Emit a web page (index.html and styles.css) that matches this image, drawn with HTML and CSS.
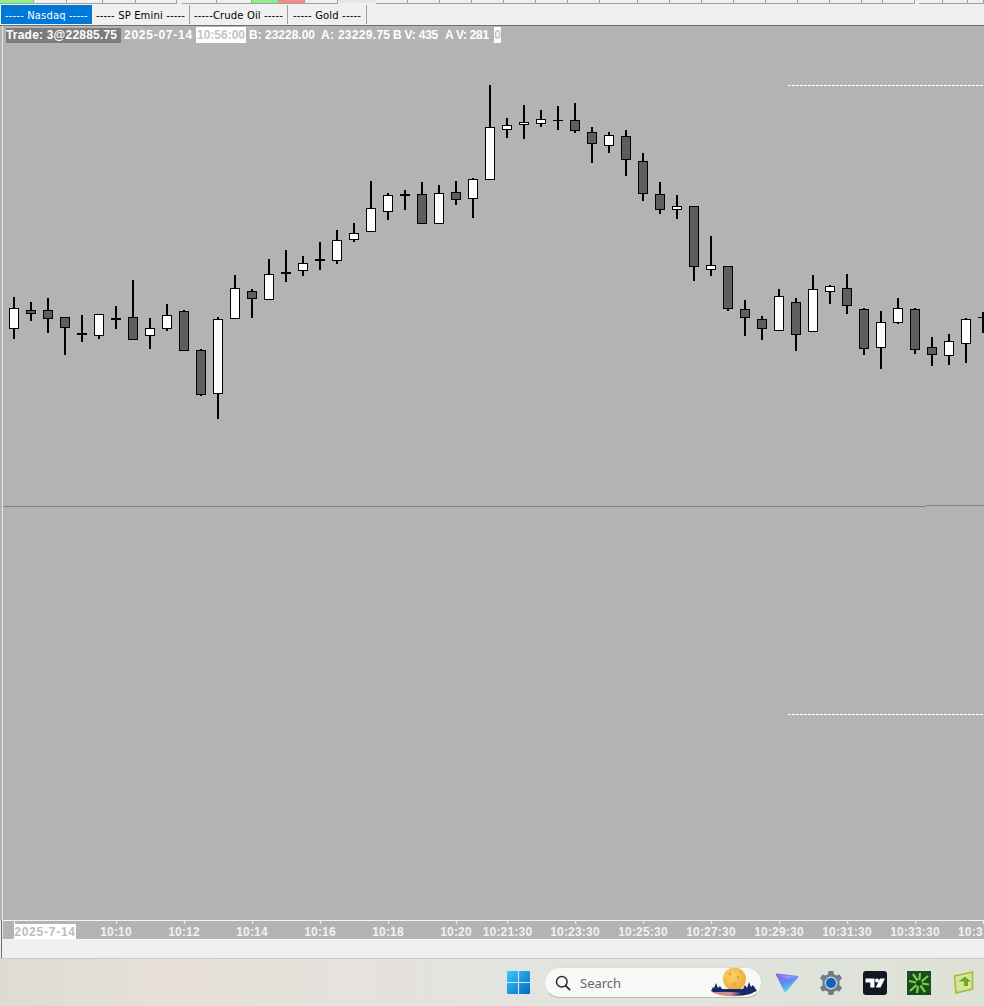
FILE: index.html
```html
<!DOCTYPE html>
<html lang="en">
<head>
<meta charset="utf-8">
<title>Chart</title>
<link rel="stylesheet" href="styles.css">
</head>
<body>
<div class="app">
  <div class="strip">
    <i class="seg s-green w34"></i><i class="seg w33"></i><i class="seg w36"></i><i class="seg w33"></i><i class="seg w41"></i><i class="seg gap5"></i><i class="seg w35"></i><i class="seg w35"></i><i class="seg s-green w27"></i><i class="seg s-red w26"></i><i class="seg w33"></i><i class="seg s-dot w38"></i>
    <i class="seg w32"></i><i class="seg w32"></i><i class="seg w32"></i><i class="seg w32"></i><i class="seg w32"></i><i class="seg w32"></i><i class="seg w32"></i><i class="seg w38"></i><i class="seg w32"></i><i class="seg w32"></i><i class="seg w32"></i><i class="seg w32"></i><i class="seg w32"></i><i class="seg w32"></i><i class="seg w32"></i><i class="seg w21"></i><i class="seg w32"></i><i class="seg gap4"></i><i class="seg w24"></i><i class="seg w25"></i><i class="seg w16"></i>
  </div>
  <div class="tabs">
    <span class="tab active">----- Nasdaq -----</span>
    <span class="tab w-sp">----- SP Emini -----</span>
    <span class="tab w-oil">-----Crude Oil -----</span>
    <span class="tab w-gold">----- Gold -----</span>
  </div>
  <div class="chart">
    <div class="chart-left"></div>
    <div class="chart-main">
      <div class="quote">
        <span class="q-trade">Trade: 3@22885.75</span>
        <span class="q-date">2025-07-14</span>
        <span class="q-time">10:56:00</span>
        <span class="q-b">B: 23228.00</span>
        <span class="q-a">A: 23229.75</span>
        <span class="q-bv">B V: 435</span>
        <span class="q-av">A V: 281</span>
        <span class="q-zero">0</span>
      </div>
      <svg class="plot" width="984" height="894" viewBox="0 0 984 894" shape-rendering="crispEdges" aria-label="Candlestick chart">
        <g transform="translate(-3 -26)">
          <line class="pane" x1="3" y1="506.5" x2="926" y2="506.5"/>
          <line class="pane" x1="926" y1="505.5" x2="984" y2="505.5"/>
          <line class="dash" x1="788" y1="85.5" x2="984" y2="85.5"/>
          <line class="dash" x1="788" y1="714.5" x2="984" y2="714.5"/>
          <g class="wicks">
            <path d="M14 297V339M31 302V321M48 298V333M65 317V355M82 315V342M99 314V339M116 306V329M133 280V340M150 318V349M167 304V331M184 310V351M201 349V396M218 317V419M235 275V319M252 289V318M269 259V300M286 250V282M303 256V276M320 242V270M337 230V264M354 223V242M371 181V232M388 193V220M405 190V210M422 182V224M439 185V224M456 181V205M473 178V218M490 85V180M507 118V138M524 105V139M541 110V127M558 106V130M575 103V133M592 127V163M609 132V153M626 130V176M643 153V201M660 182V214M677 195V219M694 206V281M711 236V276M728 266V311M745 300V336M762 316V340M779 289V331M796 298V351M813 275V332M830 285V304M847 274V314M864 308V355M881 311V369M898 298V324M915 308V354M932 337V366M949 334V365M966 318V363M983 312V333"/>
          </g>
          <g class="dojis">
            <rect x="77" y="333" width="10" height="2"/><rect x="111" y="318" width="10" height="2"/><rect x="281" y="272" width="10" height="2"/><rect x="315" y="259" width="10" height="2"/><rect x="400" y="194" width="10" height="2"/><rect x="553" y="120" width="10" height="1"/><rect x="978" y="317" width="6" height="1"/>
          </g>
          <g class="up">
            <rect x="9.5" y="308.5" width="9" height="20"/><rect x="94.5" y="314.5" width="9" height="21"/><rect x="145.5" y="328.5" width="9" height="7"/><rect x="162.5" y="315.5" width="9" height="13"/><rect x="213.5" y="319.5" width="9" height="74"/><rect x="230.5" y="288.5" width="9" height="30"/><rect x="264.5" y="274.5" width="9" height="25"/><rect x="298.5" y="263.5" width="9" height="7"/><rect x="332.5" y="240.5" width="9" height="20"/><rect x="349.5" y="233.5" width="9" height="6"/><rect x="366.5" y="208.5" width="9" height="23"/><rect x="383.5" y="195.5" width="9" height="16"/><rect x="434.5" y="193.5" width="9" height="30"/><rect x="468.5" y="179.5" width="9" height="19"/><rect x="485.5" y="127.5" width="9" height="52"/><rect x="502.5" y="125.5" width="9" height="4"/><rect x="519.5" y="122.5" width="9" height="2"/><rect x="536.5" y="119.5" width="9" height="4"/><rect x="604.5" y="135.5" width="9" height="10"/><rect x="672.5" y="206.5" width="9" height="3"/><rect x="706.5" y="265.5" width="9" height="4"/><rect x="774.5" y="296.5" width="9" height="34"/><rect x="808.5" y="289.5" width="9" height="42"/><rect x="825.5" y="286.5" width="9" height="5"/><rect x="876.5" y="322.5" width="9" height="25"/><rect x="893.5" y="308.5" width="9" height="14"/><rect x="944.5" y="341.5" width="9" height="14"/><rect x="961.5" y="319.5" width="9" height="24"/>
          </g>
          <g class="down">
            <rect x="26.5" y="310.5" width="9" height="3"/><rect x="43.5" y="310.5" width="9" height="8"/><rect x="60.5" y="317.5" width="9" height="10"/><rect x="128.5" y="317.5" width="9" height="22"/><rect x="179.5" y="311.5" width="9" height="39"/><rect x="196.5" y="350.5" width="9" height="44"/><rect x="247.5" y="291.5" width="9" height="7"/><rect x="417.5" y="194.5" width="9" height="29"/><rect x="451.5" y="192.5" width="9" height="7"/><rect x="570.5" y="120.5" width="9" height="10"/><rect x="587.5" y="132.5" width="9" height="11"/><rect x="621.5" y="136.5" width="9" height="23"/><rect x="638.5" y="161.5" width="9" height="32"/><rect x="655.5" y="194.5" width="9" height="15"/><rect x="689.5" y="206.5" width="9" height="60"/><rect x="723.5" y="266.5" width="9" height="42"/><rect x="740.5" y="309.5" width="9" height="8"/><rect x="757.5" y="319.5" width="9" height="9"/><rect x="791.5" y="302.5" width="9" height="32"/><rect x="842.5" y="288.5" width="9" height="17"/><rect x="859.5" y="309.5" width="9" height="39"/><rect x="910.5" y="309.5" width="9" height="40"/><rect x="927.5" y="347.5" width="9" height="7"/>
          </g>
        </g>
      </svg>
    </div>
  </div>
  <div class="axis">
    <div class="axis-left"></div>
    <div class="axis-main">
      <span class="tick t-date">2025-7-14</span>
      <span class="tick t1">10:10</span><span class="tick t2">10:12</span><span class="tick t3">10:14</span><span class="tick t4">10:16</span><span class="tick t5">10:18</span><span class="tick t6">10:20</span><span class="tick t7">10:21:30</span><span class="tick t8">10:23:30</span><span class="tick t9">10:25:30</span><span class="tick t10">10:27:30</span><span class="tick t11">10:29:30</span><span class="tick t12">10:31:30</span><span class="tick t13">10:33:30</span><span class="tick t14">10:3</span>
    </div>
  </div>
  <div class="footer"></div>
  <div class="taskbar">
    <svg class="tb-win" width="23" height="23" viewBox="0 0 24 24">
      <defs><linearGradient id="wg" x1="0" y1="0" x2="1" y2="1"><stop offset="0" stop-color="#3cc8fb"/><stop offset="1" stop-color="#0068c8"/></linearGradient></defs>
      <path fill="url(#wg)" d="M0 1Q0 0 1 0H11.4V11.4H0ZM12.6 0H23Q24 0 24 1V11.4H12.6ZM0 12.6H11.4V24H1Q0 24 0 23ZM12.6 12.6H24V23Q24 24 23 24H12.6Z"/>
    </svg>
    <div class="search">
      <svg class="search-ico" width="16" height="16" viewBox="0 0 16 16"><circle cx="6.8" cy="6.8" r="5.3" fill="none" stroke="#2b2b2b" stroke-width="1.5"/><path d="M10.6 10.6L14.6 14.6" stroke="#2b2b2b" stroke-width="1.8" stroke-linecap="round"/></svg>
      <span class="search-text">Search</span>
      <svg class="moon" width="48" height="30" viewBox="0 0 48 30">
        <defs>
          <radialGradient id="mg" cx=".4" cy=".35" r=".7"><stop offset="0" stop-color="#fbd565"/><stop offset="1" stop-color="#f0a63a"/></radialGradient>
          <linearGradient id="gg" x1="0" y1="0" x2="1" y2="0"><stop offset="0" stop-color="#d98a7a"/><stop offset=".45" stop-color="#c98f90"/><stop offset=".7" stop-color="#1c2a63"/></linearGradient>
        </defs>
        <circle cx="24.500" cy="12" r="11.500" fill="url(#mg)"/>
        <circle cx="20" cy="7" r="1.6" fill="#e59a38"/><circle cx="28" cy="10" r="1.3" fill="#e59a38"/><circle cx="24" cy="17" r="1.5" fill="#e59a38"/><circle cx="31" cy="5" r="1" fill="#e59a38"/>
        <path fill="#182a66" d="M1 24L3 20 4 21 6 16 8 21 10 19 12 22H33L35 18 37 21 39 15 41 20 43 18 47 24 44 25H3Z"/>
        <path fill="url(#gg)" d="M2 25H44C38 30 10 31 2 25Z"/>
      </svg>
    </div>
    <svg class="tb-vpn" width="24" height="20" viewBox="0 0 24 20">
      <defs><linearGradient id="vg" x1="0" y1="0" x2=".6" y2="1"><stop offset="0" stop-color="#8a5cf0"/><stop offset=".6" stop-color="#5f8ff5"/><stop offset="1" stop-color="#62e8e0"/></linearGradient></defs>
      <path fill="url(#vg)" d="M1 2Q0 .5 2 .5L23 3Q24 3.5 23 4.5L12 18Q10 20 9 18Z"/>
      <path fill="#b7a5f7" opacity=".55" d="M3 2L23 3.5 13 6Z"/>
    </svg>
    <svg class="tb-gear" width="24" height="24" viewBox="0 0 24 24">
      <path fill="#6f7b86" d="M9.6 0H14.4L15 3.3 17.5 4.6 20.6 3.4 23 7.5 20.5 9.6V14.4L23 16.5 20.6 20.6 17.5 19.4 15 20.7 14.4 24H9.6L9 20.7 6.5 19.4 3.4 20.6 1 16.5 3.5 14.4V9.6L1 7.5 3.4 3.4 6.5 4.6 9 3.3Z"/>
      <circle cx="12" cy="12" r="6.500" fill="#c9ccce"/><circle cx="12" cy="12" r="5" fill="#0f63bb"/>
    </svg>
    <svg class="tb-tv" width="24" height="24" viewBox="0 0 24 24">
      <rect width="24" height="24" rx="3" fill="#131722"/>
      <path fill="#fff" d="M2.500 7.500H11.500V16.500H7.300V11.500H2.500Z"/><circle cx="14" cy="9.500" r="2" fill="#fff"/><path fill="#fff" d="M17 7.500H22L17.500 16.500H12.800Z"/>
    </svg>
    <svg class="tb-green" width="24" height="24" viewBox="0 0 24 24">
      <rect width="24" height="24" fill="#14501e"/>
      <path stroke="#7fd045" stroke-width="2.200" fill="none" d="M13 2L12.300 9M21 5L14.500 10.500M22 13.500L15 12.500M18 21L13.500 14.500M10 22L11 15M3 20L9.500 14M2 10L9 11.500M6 3L10.500 9.500"/>
    </svg>
    <svg class="tb-arrow" width="21" height="23" viewBox="0 0 21 23">
      <path fill="#d7e49c" stroke="#a0bd38" stroke-width="1.600" d="M1.500 5L19.500 1V18L3 22Z"/>
      <path fill="#6eaa1c" d="M12 5.500L18 10.500H15V15H11V10.500H5.500Z"/>
    </svg>
  </div>
</div>
</body>
</html>
```

FILE: styles.css
```css
* { box-sizing: border-box; }
html, body { margin: 0; padding: 0; }
body { width: 984px; height: 1006px; overflow: hidden; font-family: "Liberation Sans", Arial, sans-serif; background: #f0f0f0; }
.app { width: 984px; height: 1006px; display: flex; flex-direction: column; overflow: hidden; }

.strip { height: 4px; display: flex; flex: none; overflow: hidden; background: #f0f0f0; }
.seg { display: block; flex: none; height: 4px; border-right: 1px solid #a0a0a0; border-bottom: 1px solid #a0a0a0; }
.s-green { background: #8ff08a; }
.s-red { background: #f58a86; }
.s-dot { background: #e6e6e6; border-bottom-color: #f0f0f0; border-right-color: #f0f0f0; }
.w16 { width: 16px; } .w21 { width: 21px; } .w24 { width: 24px; } .w25 { width: 25px; } .w26 { width: 26px; } .w27 { width: 27px; }
.w32 { width: 32px; } .w33 { width: 33px; } .w34 { width: 34px; } .w35 { width: 35px; } .w36 { width: 36px; } .w38 { width: 38px; } .w41 { width: 41px; }
.gap5 { width: 5px; border-bottom: 0; border-right: 0; }
.gap4 { width: 4px; border-bottom: 0; border-right: 0; }

.tabs { height: 21px; flex: none; display: flex; align-items: stretch; background: #f0f0f0; padding: 1px 0 1px 1px; }
.tab { flex: none; display: flex; align-items: center; justify-content: center; padding-top: 1px; font-family: "DejaVu Sans", "Liberation Sans", sans-serif; font-size: 10px; letter-spacing: .15px; color: #000; border-right: 1px solid #a0a0a0; white-space: pre; }
.tab.active { width: 91px; background: #0078d7; color: #fff; border-right: 0; }
.w-sp { width: 98px; }
.w-oil { width: 98px; }
.w-gold { width: 79px; }

.chart { height: 895px; flex: none; display: flex; border-top: 1px solid #6e6e6e; }
.chart-left { width: 3px; flex: none; background: linear-gradient(to right, #b3b3b3 0, #b3b3b3 2px, #e4e4e4 2px); }
.chart-main { flex: 1; position: relative; background: #b3b3b3; overflow: hidden; }
.plot { display: block; }
.quote { position: absolute; left: 3px; top: 0; height: 17px; width: 600px; font-size: 12px; font-weight: 700; color: #fff; white-space: pre; z-index: 1; }
.quote span { position: absolute; top: 1px; height: 16px; line-height: 16px; }
.quote .q-trade { left: 0; top: 2px; width: 115px; height: 15px; line-height: 15px; background: #7c7c7c; letter-spacing: .2px; }
.q-date { left: 118px; letter-spacing: .75px; }
.q-time { left: 190px; width: 50px; background: #fff; color: #c4c4c4; text-align: center; }
.q-b { left: 243px; }
.q-a { left: 315px; letter-spacing: .3px; }
.q-bv { left: 387px; letter-spacing: -.2px; }
.q-av { left: 439px; letter-spacing: -.3px; }
.q-zero { left: 488px; width: 7px; background: #fff; color: #c4c4c4; text-align: center; }

.wicks path { stroke: #000; stroke-width: 2; fill: none; }
.dojis rect { fill: #000; }
.up rect { fill: #fff; stroke: #000; stroke-width: 1; }
.down rect { fill: #5e5e5e; stroke: #000; stroke-width: 1; }
.pane { stroke: #808080; stroke-width: 1; }
.dash { stroke: #fff; stroke-width: 1; stroke-dasharray: 3 1; }

.axis { height: 20px; flex: none; display: flex; }
.axis-left { width: 3px; flex: none; background: linear-gradient(to right, #efefef 0, #efefef 1px, #6e6e6e 1px, #6e6e6e 2px, #e4e4e4 2px); }
.axis-main { flex: 1; position: relative; background: #b3b3b3; border-top: 1px solid #f4f4f4; border-bottom: 1px solid #f4f4f4; overflow: hidden; }
.tick { position: absolute; top: 3px; font-size: 12px; line-height: 16px; font-weight: 700; color: #f2f2f2; transform: translateX(-50%); white-space: nowrap; letter-spacing: .2px; }
.tick::before { content: ""; position: absolute; left: 50%; top: -3px; width: 1px; height: 3px; background: #f4f4f4; }
.t-date { left: 42px; width: 62px; height: 16px; background: #fff; color: #bdbdbd; text-align: center; letter-spacing: .75px; }
.t-date::before { left: 0; }
.t1 { left: 113px; } .t2 { left: 181px; } .t3 { left: 249px; } .t4 { left: 317px; } .t5 { left: 385px; } .t6 { left: 453px; }
.t7 { left: 504.5px; } .t8 { left: 572px; } .t9 { left: 640px; } .t10 { left: 708px; } .t11 { left: 776px; } .t12 { left: 844px; } .t13 { left: 912px; }
.t14 { left: 955px; transform: none; }
.t14::before { left: 25px; }

.footer { height: 19px; flex: none; background: linear-gradient(to right, #efefef 0, #efefef 1px, #6e6e6e 1px, #6e6e6e 2px, #efefef 2px); border-bottom: 1px solid #c8c8c8; }

.taskbar { flex: 1; display: flex; align-items: center; padding-left: 507px; background: linear-gradient(to right, #dedcd0 0, #e6e0d8 15%, #e7e1dc 30%, #e3e3e0 50%, #e1e3de 70%, #dee2d4 100%); }
.tb-win { flex: none; margin-right: 14px; }
.search { flex: none; width: 218px; height: 31px; border-radius: 16px; background: #f8f8f7; border: 1px solid #dcdcd8; border-bottom-color: #b8b8b4; display: flex; align-items: center; padding-left: 10px; position: relative; }
.search-ico { flex: none; margin-right: 9px; }
.search-text { font-family: "Noto Sans", "Liberation Sans", sans-serif; font-size: 13px; color: #666; }
.moon { position: absolute; right: 3px; top: -1px; }
.tb-vpn { flex: none; margin-left: 13px; }
.tb-gear { flex: none; margin-left: 20px; }
.tb-tv { flex: none; margin-left: 20px; }
.tb-green { flex: none; margin-left: 20px; }
.tb-arrow { flex: none; margin-left: 22px; }
```
